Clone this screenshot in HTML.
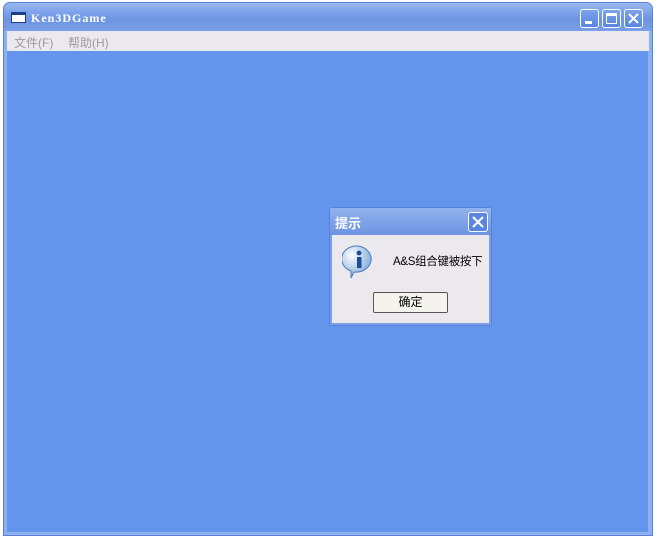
<!DOCTYPE html>
<html><head><meta charset="utf-8"><style>
*{margin:0;padding:0;box-sizing:border-box}
body{width:655px;height:538px;background:#fff;position:relative;overflow:hidden;font-family:"Liberation Sans","Noto Sans CJK SC",sans-serif}
.win{position:absolute;left:3px;top:2px;width:650px;height:534px;background:#8cb0f0;border-radius:7px 7px 0 0;border:1px solid #5a82d8}
.title{position:absolute;left:0;top:0;right:0;height:28px;border-radius:7px 7px 0 0;background:linear-gradient(#9ab8f0 0%,#7fa4ea 30%,#6e94e2 60%,#7a9fe6 100%)}
.ticon{position:absolute;left:7px;top:9px;width:15px;height:11px;background:#fff;border:1px solid #1e3c8c;border-top:3px solid #1e3c8c}
.ttext{position:absolute;left:27px;top:8px;color:#fff;font:bold 12px "Liberation Serif",serif;letter-spacing:1px}
.btn{position:absolute;top:6px;width:19px;height:19px;border:1px solid #fff;border-radius:3px;background:linear-gradient(#7aa2ee,#5a86e0)}
.menu{position:absolute;left:3px;top:28px;right:3px;height:20px;background:#ebe9ed;font-size:12px;color:#9c9c9c}
.menu span{position:absolute;top:3px}
.client{position:absolute;left:3px;top:48px;width:641px;height:481px;background:#6495ed}
.dlg{position:absolute;left:329px;top:207px;width:163px;height:119px;background:#7b9ee8;border:1px solid #5a82d8;border-radius:3px 3px 0 0}
.dt{position:absolute;left:0;top:0;right:0;height:27px;background:linear-gradient(#92b2ee,#6e94e2)}
.dt b{position:absolute;left:5px;top:5px;color:#fff;font-size:13px}
.dx{position:absolute;right:3px;top:4px;width:20px;height:20px;border:1px solid #fff;border-radius:3px;background:#5a86e0}
.db{position:absolute;left:2px;top:27px;right:2px;bottom:2px;background:#ebe9ed}
.msg{position:absolute;left:61px;top:18px;font-size:11.5px;color:#000;white-space:nowrap;letter-spacing:-0.3px}
.ok{position:absolute;left:41px;top:57px;width:75px;height:21px;border:1px solid #555;background:#f4f3ee;font-size:12px;text-align:center;line-height:19px;border-radius:2px}
</style></head><body>
<div class="win">
<div class="title"><div class="ticon"></div><div class="ttext">Ken3DGame</div>
<div class="btn" style="left:576px"><div style="position:absolute;left:4px;top:11px;width:7px;height:3px;background:#fff"></div></div>
<div class="btn" style="left:598px"><div style="position:absolute;left:3px;top:3px;width:11px;height:11px;border:1px solid #fff;border-top:3px solid #fff"></div></div>
<div class="btn" style="left:620px"><svg width="17" height="17" style="position:absolute;left:0;top:0"><path d="M4 4L13 13M13 4L4 13" stroke="#fff" stroke-width="2"/></svg></div>
</div>
<div class="menu"><span style="left:7px">文件(F)</span><span style="left:61px">帮助(H)</span></div>
<div class="client"></div>
</div>
<div class="dlg"><div class="dt"><b>提示</b><div class="dx"><svg width="18" height="18"><path d="M4 4L14 14M14 4L4 14" stroke="#fff" stroke-width="2"/></svg></div></div>
<div class="db">
<svg width="36" height="36" style="position:absolute;left:10px;top:9px"><defs><radialGradient id="g" cx=".35" cy=".3" r=".8"><stop offset="0" stop-color="#fff"/><stop offset="1" stop-color="#6fa0d8"/></radialGradient></defs><path d="M16 2a15 13 0 1 1 -4 26l-3 6 0-7a15 13 0 0 1 7-25z" fill="url(#g)" stroke="#4a7ab8"/><circle cx="17" cy="9" r="2.4" fill="#1e4c9c"/><rect x="15" y="13" width="4.5" height="11" fill="#1e4c9c"/></svg>
<div class="msg">A&amp;S组合键被按下</div>
<div class="ok">确定</div>
</div></div>
</body></html>
